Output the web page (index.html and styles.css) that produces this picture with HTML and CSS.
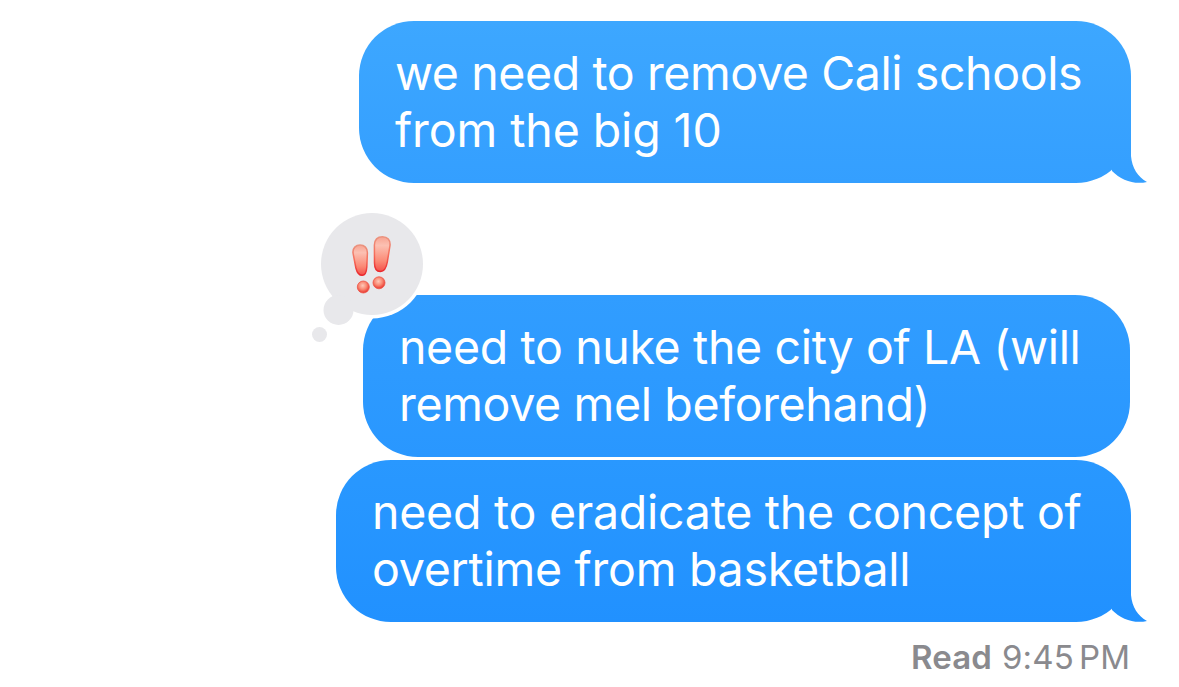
FILE: index.html
```
<!DOCTYPE html>
<html lang="en">
<head>
  <meta charset="UTF-8">
  <title>Messages</title>
  <link rel="stylesheet" href="styles.css">
</head>
<body>

  <div class="chat">

    <div class="bubble first tail">
      <p>we need to remove Cali schools</p>
      <p class="loose">from the big 10</p>
    </div>

    <div class="bubble second">
      <p>need to nuke the city of LA (will</p>
      <p>remove mel beforehand)</p>

      <!-- Tapback reaction -->
      <svg class="tapback" width="120" height="140" viewBox="308 208 120 140">
        <defs>
          <linearGradient id="mark" x1="0" y1="0" x2="0" y2="1">
            <stop offset="0" stop-color="#f7a391"/>
            <stop offset="0.25" stop-color="#fcc0b2"/>
            <stop offset="0.7" stop-color="#fb8a76"/>
            <stop offset="1" stop-color="#f4504a"/>
          </linearGradient>
          <radialGradient id="dot" cx="0.45" cy="0.38" r="0.6">
            <stop offset="0" stop-color="#ffc8b8"/>
            <stop offset="0.55" stop-color="#f98872"/>
            <stop offset="1" stop-color="#e93832"/>
          </radialGradient>
          <linearGradient id="edge" x1="0" y1="0" x2="0" y2="1">
            <stop offset="0" stop-color="#ea9480"/>
            <stop offset="0.5" stop-color="#f76d5a"/>
            <stop offset="1" stop-color="#ea262c"/>
          </linearGradient>
        </defs>
        <circle cx="372" cy="264" r="54.5" fill="#fff"/>
        <g fill="#e8e8eb">
          <circle cx="372" cy="264" r="51"/>
          <circle cx="338.500" cy="310" r="15"/>
          <circle cx="319.500" cy="334.500" r="7.500"/>
        </g>
        <g fill="url(#mark)" stroke="url(#edge)" stroke-width="1.500">
          <path d="M353 253C352.500 248 356 245 360 245C364.500 245 367.500 248 367.400 253L366.800 267C366.500 272 365 275.300 362.200 275.300C359.200 275.300 357 272.500 355.900 268Z"/>
          <path d="M374.400 245C374.600 239.500 378 236.700 382.500 236.700C387.500 236.700 390.500 240 390 245.500L387.300 262C386.300 268 384.500 271.500 380.300 271.500C376.300 271.500 374.500 268 374.500 263Z"/>
        </g>
        <g fill="url(#dot)" stroke="#ee5547" stroke-width="0.800">
          <circle cx="363.300" cy="287" r="6"/>
          <circle cx="379" cy="282.800" r="6"/>
        </g>
      </svg>
    </div>

    <div class="bubble third tail">
      <p>need to eradicate the concept of</p>
      <p>overtime from basketball</p>
    </div>

    <div class="receipt"><b>Read</b><span class="time">9:45</span><span>PM</span></div>

  </div>

</body>
</html>
```
FILE: styles.css
```
body {
  margin: 0;
  background-color: #fff;
  font-family: Inter, "Liberation Sans", sans-serif;
}

.chat {
  display: flex;
  flex-direction: column;
  align-items: flex-end;
  box-sizing: border-box;
  height: 687px;
  padding: 21px 48px 0 0;
  overflow: hidden;
}

/* Message bubbles */
.bubble {
  position: relative;
  box-sizing: border-box;
  height: 162px;
  padding: 24px 0 24px 36px;
  border-radius: 55px;
  color: #fff;
  font-size: 46.5px;
  font-weight: 380;
  letter-spacing: -0.4px;
  line-height: 57px;
  white-space: nowrap;
}

.bubble p {
  margin: 0;
}

.bubble .loose {
  letter-spacing: -0.1px;
}

.first {
  width: 772px;
  background: linear-gradient(#3da7ff, #349fff);
}

.second {
  width: 767px;
  margin: 112px 1px 3px 0;
  background: linear-gradient(#319dff, #2997ff);
  letter-spacing: -0.35px;
}

.third {
  width: 795px;
  background: linear-gradient(#2998ff, #2191ff);
  letter-spacing: -0.26px;
}

/* Little curl in the bottom right corner */
.tail::after {
  content: "";
  position: absolute;
  top: 0;
  right: -17px;
  width: 72px;
  height: 162px;
  background: inherit;
  clip-path: path("M55 100V135C56 147 62 156 71 161C58 164 45 159 36 150L30 100Z");
}

.tapback {
  position: absolute;
  left: -55px;
  top: -87px;
}

/* Read receipt */
.receipt {
  display: flex;
  margin: 15px 1px 0 0;
  color: #8a8a8e;
  font-size: 33px;
  line-height: 40px;
}

.receipt b {
  font-weight: 600;
  letter-spacing: 0.1px;
}

.time {
  margin: 0 5px 0 10px;
  letter-spacing: 0.2px;
}
```
